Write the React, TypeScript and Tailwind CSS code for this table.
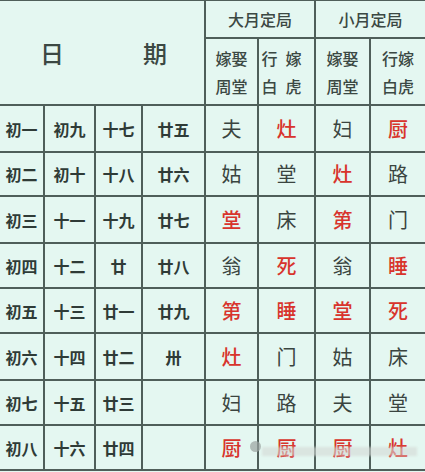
import React from "react";

type Cell = { t: string; red?: boolean };

const rows: { dates: string[]; big: Cell[]; small: Cell[] }[] = [
  { dates: ["初一", "初九", "十七", "廿五"], big: [{ t: "夫" }, { t: "灶", red: true }], small: [{ t: "妇" }, { t: "厨", red: true }] },
  { dates: ["初二", "初十", "十八", "廿六"], big: [{ t: "姑" }, { t: "堂" }], small: [{ t: "灶", red: true }, { t: "路" }] },
  { dates: ["初三", "十一", "十九", "廿七"], big: [{ t: "堂", red: true }, { t: "床" }], small: [{ t: "第", red: true }, { t: "门" }] },
  { dates: ["初四", "十二", "廿", "廿八"], big: [{ t: "翁" }, { t: "死", red: true }], small: [{ t: "翁" }, { t: "睡", red: true }] },
  { dates: ["初五", "十三", "廿一", "廿九"], big: [{ t: "第", red: true }, { t: "睡", red: true }], small: [{ t: "堂", red: true }, { t: "死", red: true }] },
  { dates: ["初六", "十四", "廿二", "卅"], big: [{ t: "灶", red: true }, { t: "门" }], small: [{ t: "姑" }, { t: "床" }] },
  { dates: ["初七", "十五", "廿三", ""], big: [{ t: "妇" }, { t: "路" }], small: [{ t: "夫" }, { t: "堂" }] },
  { dates: ["初八", "十六", "廿四", ""], big: [{ t: "厨", red: true }, { t: "厨", red: true }], small: [{ t: "厨", red: true }, { t: "灶", red: true }] },
];

const cell = "bg-[#e4f7f1] flex items-center justify-center";

export default function App() {
  return (
    <div
      className="relative w-[425px] h-[472px] bg-[#e4f7f1] overflow-hidden"
      style={{ fontFamily: '"Noto Sans CJK SC", "Noto Sans", sans-serif' }}
    >
      <div className="grid grid-cols-[43px_49px_45px_61px_51px_55px_53px_54px] grid-rows-[36px_65px_45px_42px_45px_43px_43px_45px_43px_43px] gap-[2px] bg-[#4f5f5a] pt-[1px] pb-[2px]">
        {/* 日期 header */}
        <div className="col-start-1 col-end-5 row-start-1 row-end-3 bg-[#e4f7f1] flex items-center pl-[40px] gap-[79px] text-[24px] text-[#3b4843] font-medium">
          <span>日</span>
          <span>期</span>
        </div>
        <div className={`col-start-5 col-end-7 row-start-1 ${cell} text-[16px] text-[#3b4843] font-medium`}>大月定局</div>
        <div className={`col-start-7 col-end-9 row-start-1 ${cell} text-[16px] text-[#3b4843] font-medium`}>小月定局</div>

        <div className={`col-start-5 row-start-2 ${cell} flex-col text-[16px] leading-[28px] text-[#3b4843] font-medium`}>
          <span>嫁娶</span>
          <span>周堂</span>
        </div>
        <div className={`col-start-6 row-start-2 ${cell} flex-col text-[16px] leading-[28px] text-[#3b4843] font-medium pr-[10px]`}>
          <span className="flex gap-[8px]"><span>行</span><span>嫁</span></span>
          <span className="flex gap-[8px]"><span>白</span><span>虎</span></span>
        </div>
        <div className={`col-start-7 row-start-2 ${cell} flex-col text-[16px] leading-[28px] text-[#3b4843] font-medium`}>
          <span>嫁娶</span>
          <span>周堂</span>
        </div>
        <div className={`col-start-8 row-start-2 ${cell} flex-col text-[16px] leading-[28px] text-[#3b4843] font-medium`}>
          <span>行嫁</span>
          <span>白虎</span>
        </div>

        {rows.map((r, i) => (
          <React.Fragment key={i}>
            {r.dates.map((d, j) => (
              <div key={"d" + j} className={`${cell} text-[16px] font-bold text-[#2f3b37]`}>
                {d}
              </div>
            ))}
            {[...r.big, ...r.small].map((c, j) => (
              <div
                key={"c" + j}
                className={`${cell} text-[20px] ${c.red ? "text-[#d8342c] font-medium" : "text-[#3a4440]"}`}
              >
                {c.t}
              </div>
            ))}
          </React.Fragment>
        ))}
      </div>

      {/* faint watermark over the last row */}
      <div className="absolute left-[250px] top-[441px] w-[11px] h-[11px] rounded-full bg-[#9aa29f]/70" />
      <div className="absolute left-[262px] top-[447px] w-[155px] h-[9px] bg-[#d3d8d6]/60 blur-[1px]" />
    </div>
  );
}
